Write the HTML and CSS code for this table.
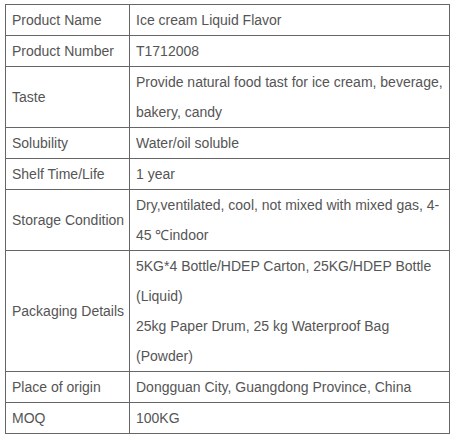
FILE: index.html
```html
<!DOCTYPE html>
<html>
<head>
<meta charset="utf-8">
<link rel="stylesheet" href="styles.css">
</head>
<body>
<div class="wrap">
<table class="spec">
<colgroup><col class="c1"><col class="c2"></colgroup>
<tr><td class="k">Product Name</td><td>Ice cream Liquid Flavor</td></tr>
<tr><td class="k">Product Number</td><td>T1712008</td></tr>
<tr><td class="k">Taste</td><td>Provide natural food tast for ice cream, beverage, bakery, candy</td></tr>
<tr><td class="k">Solubility</td><td>Water/oil soluble</td></tr>
<tr><td class="k">Shelf Time/Life</td><td>1 year</td></tr>
<tr><td class="k">Storage Condition</td><td>Dry,ventilated, cool, not mixed with mixed gas, 4-45 ℃indoor</td></tr>
<tr><td class="k">Packaging Details</td><td><div>5KG*4 Bottle/HDEP Carton, 25KG/HDEP Bottle (Liquid)</div><div>25kg Paper Drum, 25 kg Waterproof Bag (Powder)</div></td></tr>
<tr><td class="k">Place of origin</td><td>Dongguan City, Guangdong Province, China</td></tr>
<tr><td class="k">MOQ</td><td>100KG</td></tr>
</table>
</div>
</body>
</html>
```
FILE: styles.css
```css
html, body { margin: 0; padding: 0; background: #fff; }
.wrap { padding: 4px 0 0 5px; }
.spec {
  border-collapse: collapse;
  width: 444px;
  table-layout: fixed;
  font-family: "Liberation Sans", Arial, sans-serif;
  font-size: 14px;
  line-height: 30px;
  color: #555;
}
.c1 { width: 124px; }
.c2 { width: 320px; }
.spec td {
  border: 1px solid #666;
  padding: 0 6px;
  vertical-align: middle;
}
.spec td.k {
  white-space: nowrap;
  padding-right: 0;
}
```
